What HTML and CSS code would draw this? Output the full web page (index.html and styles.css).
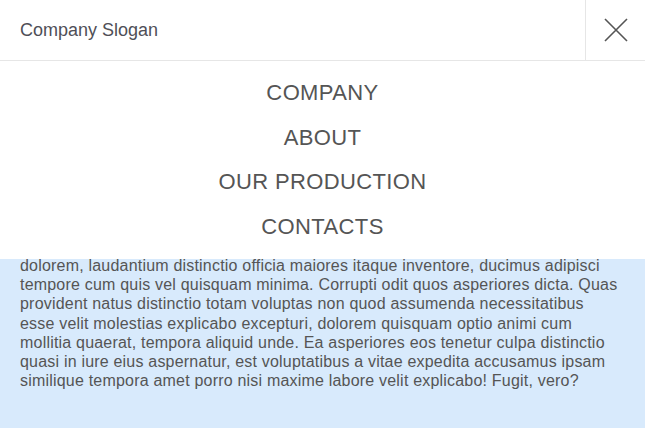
FILE: index.html
```html
<!DOCTYPE html>
<html lang="en">
<head>
<meta charset="utf-8">
<title>Company Slogan</title>
<link rel="stylesheet" href="styles.css">
</head>
<body>
<header class="header">
  <div class="slogan">Company Slogan</div>
  <button class="close" aria-label="Close menu">
    <svg width="24" height="24" viewBox="0 0 24 24" aria-hidden="true">
      <path d="M1 1 L23 23 M23 1 L1 23" stroke="#555" stroke-width="1.6" fill="none"/>
    </svg>
  </button>
</header>
<main class="content">
  <p class="text">dolorem, laudantium distinctio officia maiores itaque inventore, ducimus adipisci tempore cum quis vel quisquam minima. Corrupti odit quos asperiores dicta. Quas provident natus distinctio totam voluptas non quod assumenda necessitatibus esse velit molestias explicabo excepturi, dolorem quisquam optio animi cum mollitia quaerat, tempora aliquid unde. Ea asperiores eos tenetur culpa distinctio quasi in iure eius aspernatur, est voluptatibus a vitae expedita accusamus ipsam similique tempora amet porro nisi maxime labore velit explicabo! Fugit, vero?</p>
</main>
<nav class="menu">
  <a class="menu-item" href="#">COMPANY</a>
  <a class="menu-item" href="#">ABOUT</a>
  <a class="menu-item" href="#">OUR PRODUCTION</a>
  <a class="menu-item" href="#">CONTACTS</a>
</nav>
</body>
</html>
```
FILE: styles.css
```css
html, body {
  margin: 0;
  padding: 0;
  height: 100%;
}
body {
  font-family: "Liberation Sans", Arial, sans-serif;
  color: #555;
  background: #d8eafc;
  position: relative;
  display: flex;
  flex-direction: column;
}
.header {
  height: 60px;
  border-bottom: 1px solid #e6e6e6;
  background: #fff;
  display: flex;
  align-items: stretch;
  justify-content: space-between;
  flex-shrink: 0;
}
.slogan {
  display: flex;
  align-items: center;
  padding-left: 20px;
  font-size: 18px;
  color: #4f4f57;
}
.close {
  width: 60px;
  border: 0;
  border-left: 1px solid #e6e6e6;
  background: #fff;
  padding: 0;
  display: flex;
  align-items: center;
  justify-content: center;
  cursor: pointer;
}
.close svg {
  display: block;
}
.content {
  flex: 1;
  padding: 195px 24px 20px 20px;
}
.text {
  margin: 0;
  font-size: 16px;
  line-height: 1.2;
  letter-spacing: 0.2px;
}
.menu {
  position: absolute;
  top: 61px;
  left: 0;
  right: 0;
  background: #fff;
  padding: 10px 0;
  display: flex;
  flex-direction: column;
  align-items: center;
}
.menu-item {
  display: block;
  font-size: 22px;
  line-height: 44.5px;
  letter-spacing: 0.38px;
  color: #555;
  text-decoration: none;
}
```
